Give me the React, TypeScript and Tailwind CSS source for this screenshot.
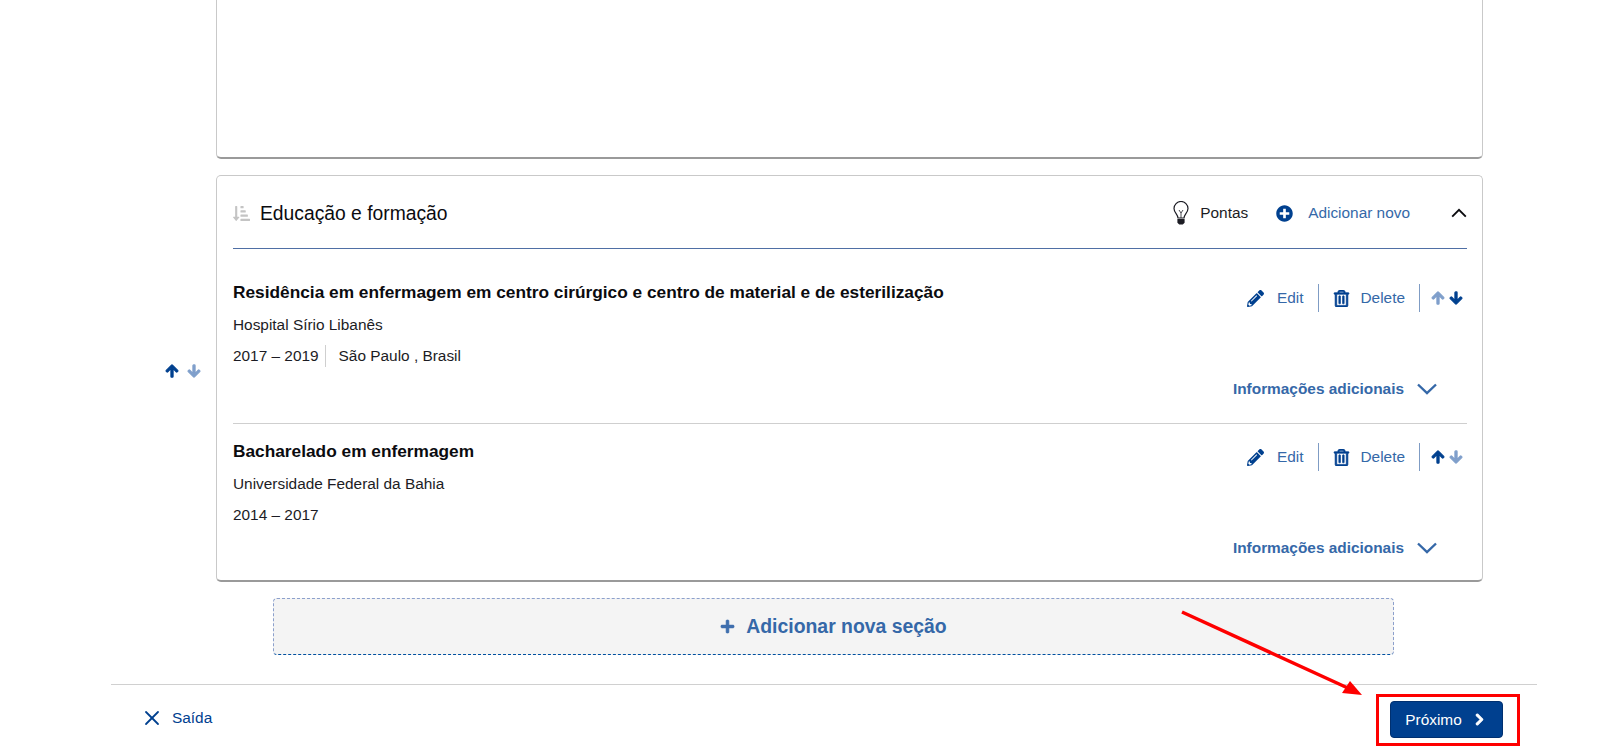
import React from 'react';
import { FaArrowDown, FaArrowUp, FaChevronRight, FaPencilAlt, FaPlus, FaPlusCircle, FaRegTrashAlt, FaSortAmountDownAlt } from 'react-icons/fa';
import { X } from 'lucide-react';

const Chevron: React.FC<{ up?: boolean; className?: string }> = ({ up, className }) => (
  <svg viewBox="0 0 20 12" fill="none" stroke="currentColor" strokeWidth="2.4" className={className}>
    <path d={up ? 'M1.5 10.5 L10 2 L18.5 10.5' : 'M1 1.5 L10 10 L19 1.5'} />
  </svg>
);

const Bulb = () => (
  <svg viewBox="0 0 16 24" className="h-[24px] w-[16px]" fill="none" stroke="#1c1c24" strokeWidth="1.2">
    <path d="M5 17 C5 13.5 1 11.5 1 7.5 A7 7 0 0 1 15 7.5 C15 11.5 11 13.5 11 17 Z" />
    <path d="M6 9 L8 12 L10 9 M8 12 V17" strokeWidth="0.8" />
    <path d="M5 18.5 H11 V21.5 L9.5 23 H6.5 L5 21.5 Z" fill="#1c1c24" />
  </svg>
);

interface EntryProps {
  title: string;
  school: string;
  years: string;
  place?: string;
  upActive: boolean;
  downActive: boolean;
  last?: boolean;
}

const Entry: React.FC<EntryProps> = ({ title, school, years, place, upActive, downActive, last }) => (
  <div className={`flex flex-col pt-[13px] ${last ? 'h-[156px]' : 'h-[159px] border-b border-[#cfcfcf]'}`}>
    <div className="flex justify-between">
      <div>
        <h3 className="mt-[2px] text-[17.3px] leading-[24px] font-bold text-[#0b0b0f]">{title}</h3>
        <p className="mt-[10px] text-[15.4px] leading-[22px] text-[#1c1c24]">{school}</p>
        <div className="mt-[9px] flex items-center text-[15.4px] leading-[22px] text-[#1c1c24]">
          <span>{years}</span>
          {place && <span className="ml-[6px] border-l border-[#cfcfcf] pl-[13px]">{place}</span>}
        </div>
      </div>
      <div className="mt-[6px] flex h-[28px] items-center pr-[4px] text-[15.4px] text-[#3568a8]">
        <FaPencilAlt className="text-[#00408f]" size={17} />
        <span className="ml-[13px] mr-[14px]">Edit</span>
        <div className="h-[28px] w-px bg-[#7f9cc4]" />
        <FaRegTrashAlt className="ml-[14px] text-[#00408f]" size={17} stroke="currentColor" strokeWidth={20} />
        <span className="ml-[11px] mr-[14px]">Delete</span>
        <div className="h-[28px] w-px bg-[#7f9cc4]" />
        <FaArrowUp className={`ml-[11px] ${upActive ? 'text-[#00408f]' : 'text-[#7f9fcb]'}`} size={14} stroke="currentColor" strokeWidth={40} />
        <FaArrowDown className={`ml-[4px] ${downActive ? 'text-[#00408f]' : 'text-[#7f9fcb]'}`} size={14} stroke="currentColor" strokeWidth={40} />
      </div>
    </div>
    <div className="mt-[13px] flex items-center justify-end pr-[30px] text-[15.4px] leading-[18px] font-bold text-[#3568a8]">
      <span>Informações adicionais</span>
      <Chevron className="ml-[13px] h-[12px] w-[20px] text-[#3568a8]" />
    </div>
  </div>
);

export default function App() {
  return (
    <div className="relative h-[756px] w-[1600px] overflow-hidden bg-white font-['Liberation_Sans',Arial,sans-serif]">
      <div className="flex flex-col pl-[216px] pr-[117px]">
        <div className="h-[159px] rounded-b-[5px] border-x border-b-2 border-x-[#c9c9c9] border-b-[#9a9a9a] bg-white" />

        <div className="relative mt-[16px] h-[407px] rounded-[5px] border border-b-2 border-[#c9c9c9] border-b-[#9a9a9a] bg-white pl-[16px] pr-[15px]">
          <div className="absolute left-[-52px] top-[188px] flex items-center gap-[8px]">
            <FaArrowUp className="text-[#00408f]" size={14} stroke="currentColor" strokeWidth={40} />
            <FaArrowDown className="text-[#7f9fcb]" size={14} stroke="currentColor" strokeWidth={40} />
          </div>

          <div className="mb-[16px] flex h-[73px] items-center justify-between border-b border-[#4f6fa5] pt-[2px]">
            <div className="flex items-center">
              <FaSortAmountDownAlt className="text-[#c4c4c4]" size={17} />
              <h2 className="ml-[10px] mt-[3px] text-[19.3px] text-[#0b0b0f]">Educação e formação</h2>
            </div>
            <div className="flex items-center text-[15.4px]">
              <Bulb />
              <span className="ml-[11px] text-[#1c1c24]">Pontas</span>
              <FaPlusCircle className="ml-[28px] text-[#00408f]" size={17} />
              <span className="ml-[15px] text-[#3568a8]">Adicionar novo</span>
              <Chevron up className="ml-[41px] h-[10px] w-[16px] text-[#0b0b0f]" />
            </div>
          </div>

          <Entry
            title="Residência em enfermagem em centro cirúrgico e centro de material e de esterilização"
            school="Hospital Sírio Libanês"
            years="2017 – 2019"
            place="São Paulo , Brasil"
            upActive={false}
            downActive
          />
          <Entry
            title="Bacharelado em enfermagem"
            school="Universidade Federal da Bahia"
            years="2014 – 2017"
            upActive
            downActive={false}
            last
          />
        </div>

        <div className="ml-[57px] mt-[16px] flex h-[57px] w-[1121px] items-center justify-center gap-[11px] rounded-[4px] border border-dashed border-[#8ca0cc] border-b-[#0050a0] bg-[#f4f4f4] text-[19.4px] font-bold text-[#3568a8]">
          <FaPlus className="text-[#3f6fae]" size={15} stroke="currentColor" strokeWidth={20} />
          <span>Adicionar nova seção</span>
        </div>
      </div>

      <div className="ml-[111px] mr-[63px] mt-[29px] flex h-[70px] items-center justify-between border-t border-[#d0d0d0] pl-[29px] pr-[34px]">
        <div className="mb-[3px] flex items-center text-[15.4px] text-[#00408f]">
          <X size={24} strokeWidth={1.8} />
          <span className="ml-[8px]">Saída</span>
        </div>
        <button className="flex h-[37px] w-[113px] items-center justify-center rounded-[4px] border border-[#003070] bg-[#00408f] pr-[2px] text-[15.4px] text-white">
          Próximo
          <FaChevronRight className="ml-[11px]" size={13} stroke="currentColor" strokeWidth={40} />
        </button>
      </div>

      {/* annotation drawn over the screenshot */}
      <div className="absolute left-[1376px] top-[694px] h-[52px] w-[144px] border-[3px] border-[#fe0000]" />
      <svg className="absolute left-0 top-0 h-[756px] w-[1600px]" viewBox="0 0 1600 756">
        <path d="M1182 612 L1350 689" stroke="#fe0000" strokeWidth="3.5" fill="none" />
        <path d="M1362 695 L1342 693 L1350 681 Z" fill="#fe0000" />
      </svg>
    </div>
  );
}
